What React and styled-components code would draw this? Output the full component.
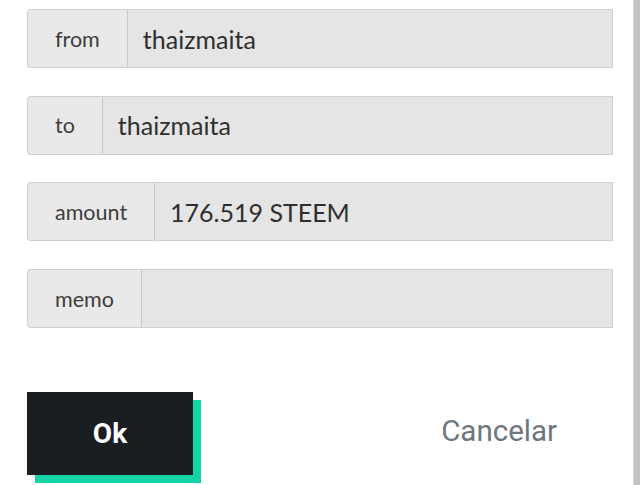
import React from 'react'
import styled, { createGlobalStyle } from 'styled-components'

const GlobalStyle = createGlobalStyle`
    html, body {
        margin: 0;
        padding: 0;
        background: #ffffff;
    }
    body {
        font-family: 'Lato', 'Open Sans', sans-serif;
    }
`;

const Page = styled.div`
    display: flex;
    width: 640px;
    height: 485px;
    overflow: hidden;
    background: #ffffff;
`;

const Content = styled.div`
    flex: 1;
    padding: 9px 20px 0 27px;
    display: flex;
    flex-direction: column;
`;

const ScrollTrack = styled.div`
    width: 6px;
    background: #c3c3c3;
    border-left: 1px solid #d6d6d6;
`;

const Form = styled.div`
    display: flex;
    flex-direction: column;
    gap: 27.7px;
`;

const InputGroup = styled.div`
    display: flex;
    height: 59px;
`;

const Addon = styled.div`
    display: flex;
    align-items: center;
    padding: 0 27px;
    background: #e9e9e9;
    border: 1px solid #cfcfcf;
    border-right: 1px solid #c9c9c9;
    border-radius: 4px 0 0 4px;
    color: #3d3d3d;
    font-size: 21.5px;
    box-sizing: border-box;
`;

const Field = styled.div`
    flex: 1;
    display: flex;
    align-items: center;
    padding-left: 15px;
    background: #e5e5e5;
    border: 1px solid #cfcfcf;
    border-left: none;
    border-top-color: #d2d2d2;
    color: #2f2f2f;
    font-size: 25px;
    box-sizing: border-box;
`;

const Actions = styled.div`
    display: flex;
    align-items: center;
    justify-content: space-between;
    margin-top: 64px;
    padding-right: 56px;
`;

const OkButton = styled.button`
    width: 166px;
    height: 83px;
    border: none;
    border-radius: 0;
    background: #1a1e23;
    box-shadow: 8px 8px 0 #12d4a4;
    color: #ffffff;
    font-family: 'Roboto', sans-serif;
    font-weight: 700;
    font-size: 28px;
    padding: 0;
`;

const CancelButton = styled.button`
    border: none;
    background: none;
    padding: 0;
    margin-top: -6px;
    color: #6f767c;
    font-family: 'Roboto', sans-serif;
    font-size: 29.5px;
`;

const fields = [
    { label: 'from', value: 'thaizmaita' },
    { label: 'to', value: 'thaizmaita' },
    { label: 'amount', value: '176.519 STEEM' },
    { label: 'memo', value: '' },
];

export default function App() {
    return (
        <>
            <GlobalStyle />
            <Page>
                <Content>
                    <Form>
                        {fields.map((f) => (
                            <InputGroup key={f.label}>
                                <Addon>{f.label}</Addon>
                                <Field>{f.value}</Field>
                            </InputGroup>
                        ))}
                    </Form>
                    <Actions>
                        <OkButton>Ok</OkButton>
                        <CancelButton>Cancelar</CancelButton>
                    </Actions>
                </Content>
                <ScrollTrack />
            </Page>
        </>
    )
}
